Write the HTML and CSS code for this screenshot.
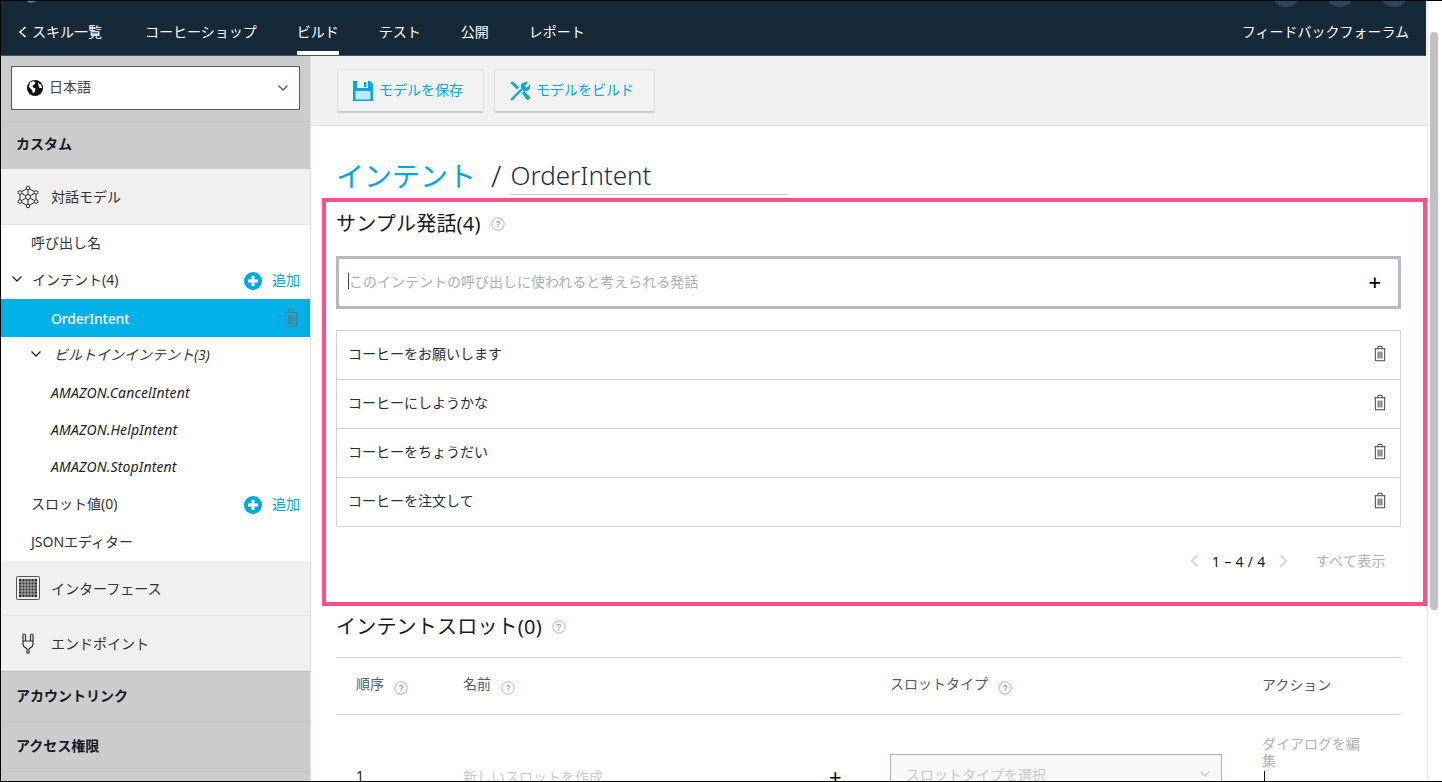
FILE: index.html
```html
<!DOCTYPE html>
<html lang="ja">

<head>
    <meta charset="UTF-8">
    <meta name="viewport" content="width=device-width, initial-scale=1.0">
    <title>インテント / OrderIntent</title>
    <link rel="stylesheet" href="styles.css">
</head>

<body>
    <svg class="sprites" width="0" height="0">
        <symbol id="trash" viewBox="0 0 16 20">
            <path d="M1.500 4.500h13M5.500 4.500V2.500q0-1 1-1h3q1 0 1 1v2M2.500 4.500v13q0 1 1 1h9q1 0 1-1v-13M5.800 7.500v8.500M8 7.500v8.500M10.200 7.500v8.500" fill="none" stroke="currentColor" stroke-width="1.200"/>
        </symbol>
        <symbol id="help" viewBox="0 0 14 14">
            <circle cx="7" cy="7" r="6.200" fill="none" stroke="#aab7b8" stroke-width="1"/>
            <text x="7" y="10" text-anchor="middle" font-size="8.500" fill="#7b8a8b" font-family="Liberation Sans, sans-serif">?</text>
        </symbol>
        <symbol id="add" viewBox="0 0 18 18">
            <circle cx="9" cy="9" r="9" fill="#00a8e1"/>
            <path d="M9 4v10M4 9h10" stroke="#fff" stroke-width="3"/>
        </symbol>
        <symbol id="chev" viewBox="0 0 12 8">
            <path d="M1.500 1.500 6 6l4.500-4.500" fill="none" stroke="currentColor" stroke-width="1.300"/>
        </symbol>
    </svg>

    <div class="frame">
        <header class="topbar">
            <div class="top-strip">
                <span class="logo-dot"></span>
                <span class="avatars"><i></i><i></i><i></i></span>
            </div>
            <nav class="nav">
                <a class="nav-item back-link">
                    <svg width="9" height="12" viewBox="0 0 9 12"><path d="M7.500 1 2 6l5.500 5" fill="none" stroke="#fff" stroke-width="1.600"/></svg>
                    スキル一覧
                </a>
                <a class="nav-item">コーヒーショップ</a>
                <a class="nav-item active">ビルド</a>
                <a class="nav-item">テスト</a>
                <a class="nav-item">公開</a>
                <a class="nav-item">レポート</a>
                <a class="nav-item nav-right">フィードバックフォーラム</a>
            </nav>
        </header>

        <div class="layout">
            <aside class="sidebar">
                <div class="lang-wrap">
                    <div class="lang-select">
                        <svg class="globe" width="16" height="16" viewBox="0 0 16 16">
                            <circle cx="8" cy="8" r="8" fill="#111"/>
                            <path d="M3 2.500 6.500 1l2 1.500-1 2-2 1 .5 2 2.500 1-.5 3-2 2-1-3.500L2 7zM11 3l3 1.500 1 3.500-2.500 0-1-2.500z" fill="#fff"/>
                        </svg>
                        <span class="cjk-text">日本語</span>
                        <svg class="lang-chev" width="12" height="8"><use href="#chev"/></svg>
                    </div>
                </div>

                <div class="group-head first">カスタム</div>

                <div class="section-row model-row">
                    <svg class="section-icon" width="24" height="24" viewBox="-1 0 24 24" fill="none" stroke="#333" stroke-width="1">
                        <path d="M11 3 19 7.500v9L11 21 3 16.500v-9z"/>
                        <circle cx="11" cy="12" r="2.500"/>
                        <path d="M11 3v6.500M11 14.500V21M3 7.500l5.800 3.300M13.200 13.200 19 16.500M19 7.500l-5.800 3.300M8.800 13.200 3 16.500"/>
                        <circle cx="11" cy="3" r="1.800" fill="#f0f0f0"/>
                        <circle cx="11" cy="21" r="1.800" fill="#f0f0f0"/>
                        <circle cx="3" cy="7.500" r="1.800" fill="#f0f0f0"/>
                        <circle cx="19" cy="7.500" r="1.800" fill="#f0f0f0"/>
                        <circle cx="3" cy="16.500" r="1.800" fill="#f0f0f0"/>
                        <circle cx="19" cy="16.500" r="1.800" fill="#f0f0f0"/>
                    </svg>
                    <span>対話モデル</span>
                </div>

                <ul class="tree">
                    <li class="tree-row lvl1">呼び出し名</li>
                    <li class="tree-row lvl1 has-add">
                        <svg class="tree-chev" width="12" height="8"><use href="#chev"/></svg>
                        <span>インテント(4)</span>
                        <span class="add"><svg width="18" height="18"><use href="#add"/></svg>追加</span>
                    </li>
                    <li class="tree-row lvl2 selected">
                        <span>OrderIntent</span>
                        <svg class="row-trash" width="16" height="20"><use href="#trash"/></svg>
                    </li>
                    <li class="tree-row lvl2 builtin">
                        <svg class="tree-chev" width="12" height="8"><use href="#chev"/></svg>
                        <span>ビルトインインテント(3)</span>
                    </li>
                    <li class="tree-row lvl2 amazon">AMAZON.CancelIntent</li>
                    <li class="tree-row lvl2 amazon">AMAZON.HelpIntent</li>
                    <li class="tree-row lvl2 amazon">AMAZON.StopIntent</li>
                    <li class="tree-row lvl1 has-add value-row">
                        <span>スロット値(0)</span>
                        <span class="add"><svg width="18" height="18"><use href="#add"/></svg>追加</span>
                    </li>
                    <li class="tree-row lvl1 json-row">JSONエディター</li>
                </ul>

                <div class="section-row">
                    <svg class="section-icon" width="24" height="24" viewBox="0 0 24 24">
                        <rect x="0.500" y="0.500" width="23" height="23" rx="1" fill="#eee" stroke="#555"/>
                        <rect x="3" y="3" width="18" height="18" fill="#333"/>
                        <path d="M6 3v18M9 3v18M12 3v18M15 3v18M18 3v18M3 6h18M3 9h18M3 12h18M3 15h18M3 18h18" stroke="#ccc" stroke-width="0.800"/>
                    </svg>
                    <span>インターフェース</span>
                </div>
                <div class="section-row">
                    <svg class="section-icon" width="24" height="24" viewBox="0 0 24 24" fill="none" stroke="#333" stroke-width="1.200">
                        <path d="M7 10h10v2.500q0 3.500-3 4.500l-1 1v4h-2v-4l-1-1q-3-1-3-4.500zM9.500 10V4.500q0-1.500-1.250-1.500T7 4.500V10M17 10V4.500Q17 3 15.750 3T14.500 4.500V10"/>
                    </svg>
                    <span>エンドポイント</span>
                </div>

                <div class="group-head">アカウントリンク</div>
                <div class="group-head">アクセス権限</div>
                <div class="group-head"></div>
            </aside>

            <main class="content">
                <div class="toolbar">
                    <button class="tool-btn">
                        <svg width="20" height="20" viewBox="0 0 20 20">
                            <path d="M0 0h17l3 3v17H0z" fill="#00a8e1"/>
                            <rect x="4" y="0" width="11" height="7" fill="#fff"/>
                            <rect x="11" y="1" width="2.500" height="5" fill="#00a8e1"/>
                            <rect x="2.500" y="10" width="15" height="8.500" fill="#bfe9f8"/>
                        </svg>
                        モデルを保存
                    </button>
                    <button class="tool-btn">
                        <svg width="20" height="20" viewBox="0 0 20 20" fill="#00a8e1">
                            <path d="M1 17.500 11 7.500l1.500 1.500-10 10q-1 .8-1.800 0t.3-1.500zM12 2.500Q15 0 18 1.500L15 4.500l.5 1.500 1.500.5 3-3q1 3-1.500 5.500T13 9.500L11 7q-.8-2.500 1-4.500z"/>
                            <path d="M1 1 3 .5l6 6-2 2-6-6zM12 12l2-2 5.500 5.500q.8 1 0 2.500-1.500 1.500-2.800.5z"/>
                        </svg>
                        モデルをビルド
                    </button>
                </div>

                <div class="title-row">
                    <a class="title-link">インテント</a>
                    <span class="title-sep">/</span>
                    <span class="title-name">OrderIntent</span>
                </div>

                <section class="utterances">
                    <h2 class="sec-title">サンプル発話(4) <svg class="help" width="14" height="14"><use href="#help"/></svg></h2>
                    <div class="utter-input">
                        <span class="caret"></span>
                        <span class="placeholder">このインテントの呼び出しに使われると考えられる発話</span>
                        <span class="plus">+</span>
                    </div>
                    <ul class="utter-list">
                        <li>コーヒーをお願いします<svg width="14" height="17"><use href="#trash"/></svg></li>
                        <li>コーヒーにしようかな<svg width="14" height="17"><use href="#trash"/></svg></li>
                        <li>コーヒーをちょうだい<svg width="14" height="17"><use href="#trash"/></svg></li>
                        <li>コーヒーを注文して<svg width="14" height="17"><use href="#trash"/></svg></li>
                    </ul>
                    <div class="pager">
                        <svg width="9" height="14" viewBox="0 0 9 14"><path d="M7.500 1.500 2 7l5.500 5.500" fill="none" stroke="#d9dddd" stroke-width="2.500"/></svg>
                        <span class="pager-count">1 – 4 / 4</span>
                        <svg width="9" height="14" viewBox="0 0 9 14"><path d="M1.500 1.500 7 7l-5.500 5.500" fill="none" stroke="#d9dddd" stroke-width="2.500"/></svg>
                        <a class="show-all">すべて表示</a>
                    </div>
                </section>

                <section class="slots">
                    <h2 class="sec-title">インテントスロット(0) <svg class="help" width="14" height="14"><use href="#help"/></svg></h2>
                    <div class="slot-grid slot-head">
                        <span>順序 <svg class="help" width="14" height="14"><use href="#help"/></svg></span>
                        <span>名前 <svg class="help" width="14" height="14"><use href="#help"/></svg></span>
                        <span></span>
                        <span>スロットタイプ <svg class="help" width="14" height="14"><use href="#help"/></svg></span>
                        <span>アクション</span>
                    </div>
                    <div class="slot-grid slot-row">
                        <span class="slot-num">1</span>
                        <span class="slot-new">新しいスロットを作成</span>
                        <span class="slot-plus">+</span>
                        <span class="slot-type">スロットタイプを選択<svg width="12" height="8"><use href="#chev"/></svg></span>
                        <span class="slot-action">ダイアログを編集<i class="slot-caret"></i></span>
                    </div>
                </section>
            </main>

            <div class="scrollbar"><div class="scroll-thumb"></div></div>
        </div>
    </div>
</body>

</html>
```

FILE: styles.css
```css
* {
    box-sizing: border-box;
}

html,
body {
    margin: 0;
    height: 100%;
    overflow: hidden;
}

body {
    font-family: "Noto Sans", "Noto Sans CJK JP", sans-serif;
    font-size: 14px;
    color: #232f3e;
    background: #fff;
}

.sprites {
    position: absolute;
}

.frame {
    height: 782px;
    border-top: 1px solid #000;
    border-left: 1px solid #000;
    border-bottom: 1px solid #000;
    overflow: hidden;
    display: flex;
    flex-direction: column;
}

/* top bar */
.topbar {
    height: 55px;
    flex: none;
    margin-right: 16px;
    background: #162938;
    border-bottom: 1px solid #3c566b;
    color: #fff;
}

.top-strip {
    height: 14px;
    display: flex;
    justify-content: space-between;
    overflow: hidden;
}

.logo-dot {
    width: 10px;
    height: 10px;
    margin: -8px 0 0 25px;
    border-radius: 50%;
    background: #1b8fc0;
}

.avatars {
    display: flex;
    gap: 26px;
    margin: -22px 18px 0 0;
}

.avatars i {
    width: 28px;
    height: 28px;
    border-radius: 50%;
    background: #2f4560;
}

.nav {
    height: 40px;
    display: flex;
    gap: 40px;
    padding: 0 17px 0 17px;
}

.nav-item {
    height: 40px;
    line-height: 34px;
    font-size: 14px;
    white-space: nowrap;
}

.back-link {
    display: flex;
    align-items: center;
    height: 34px;
    gap: 5px;
    margin-right: 3px;
}

.nav-item.active {
    border-bottom: 4px solid #fff;
}

.nav-right {
    margin-left: auto;
}

.layout {
    flex: 1;
    display: flex;
    min-height: 0;
}

/* sidebar */
.sidebar {
    width: 310px;
    flex: none;
    border-right: 1px solid #dfe1e1;
    background: #fff;
}

.lang-wrap {
    height: 65px;
    padding: 10px 10px 0;
    background: #cbcdcc;
}

.lang-select {
    height: 44px;
    display: flex;
    align-items: center;
    gap: 6px;
    padding: 0 10px 0 15px;
    background: #fff;
    border: 1px solid #545b64;
    color: #444;
}

.cjk-text {
    padding-bottom: 4px;
}

.lang-chev {
    margin-left: auto;
    color: #555;
}

.group-head {
    height: 50px;
    display: flex;
    align-items: center;
    padding: 0 0 4px 15px;
    background: #cbcdcc;
    border-top: 1px solid #c0c2c1;
    font-weight: 700;
    color: #16191f;
}

.group-head.first {
    height: 48px;
    padding-bottom: 5px;
}

.section-row {
    height: 55px;
    display: flex;
    align-items: center;
    gap: 11px;
    padding-left: 15px;
    background: #f0f0f0;
    border-bottom: 1px solid #e4e4e4;
    color: #333;
}

.section-row span {
    padding-bottom: 1px;
}

.model-row {
    height: 56px;
}

.section-icon {
    flex: none;
}

.tree {
    list-style: none;
    margin: 0;
    padding: 0;
    height: 336px;
}

.tree-row {
    height: 37px;
    display: flex;
    align-items: center;
    padding-bottom: 4px;
    color: #333;
}

.lvl1 {
    padding-left: 30px;
}

.lvl2 {
    padding-left: 50px;
}

.json-row {
    padding-bottom: 0;
}

.value-row {
    padding-bottom: 2px;
}

.tree-chev {
    flex: none;
    color: #222;
    margin-left: -20px;
    margin-right: 9px;
}

.builtin {
    font-style: italic;
    padding-left: 29px;
}

.builtin .tree-chev {
    margin-left: 0;
    margin-right: 12px;
}

.amazon {
    padding-bottom: 1px;
    font-style: italic;
    letter-spacing: 0.15px;
    color: #222;
}

.selected {
    height: 38px;
    padding-bottom: 0;
    background: #00b0e6;
    color: #fff;
    font-weight: 500;
    letter-spacing: -0.2px;
    padding-right: 11px;
    justify-content: space-between;
}

.row-trash {
    color: #5f7482;
}

.add {
    margin-left: auto;
    margin-right: 10px;
    display: flex;
    align-items: center;
    gap: 10px;
    color: #00a8e1;
}

.add svg {
    margin-top: 4px;
}

/* main column */
.content {
    flex: 1;
    min-width: 0;
}

.toolbar {
    height: 70px;
    display: flex;
    gap: 10px;
    padding: 13px 26px 0;
    background: #f1f1f1;
    border-bottom: 1px solid #e3e3e3;
}

.tool-btn {
    height: 44px;
    display: flex;
    align-items: center;
    gap: 6px;
    padding: 0 20px 4px 15px;
    background: #f2f2f2;
    border: 1px solid #e0e0e0;
    border-bottom: 2px solid #ccc;
    border-radius: 2px;
    font: inherit;
    color: #00a8e1;
}

.tool-btn svg {
    margin-top: 4px;
}

.title-row {
    height: 72px;
    display: flex;
    align-items: center;
    padding: 27px 0 0 25px;
}

.title-link {
    font-size: 28px;
    margin-bottom: 2px;
    color: #00a8e1;
}

.title-sep {
    font-size: 30px;
    font-weight: 300;
    margin-left: 15px;
    color: #232f3e;
}

.title-name {
    width: 278px;
    margin-left: 9px;
    font-size: 26px;
    font-weight: 300;
    line-height: 38px;
    border-bottom: 1px solid #c5cdcd;
    color: #232f3e;
}

.utterances {
    height: 408px;
    margin-left: 11px;
    padding: 8px 22px 0 10px;
    border: 4px solid #ff4f8b;
}

.sec-title {
    margin: 0;
    height: 28px;
    display: flex;
    align-items: center;
    gap: 6px;
    padding-bottom: 3px;
    font-size: 20px;
    font-weight: 400;
    letter-spacing: 0.2px;
    color: #16191f;
}

.help {
    vertical-align: middle;
    flex: none;
}

.sec-title .help {
    margin-top: 3px;
    margin-left: 4px;
}

.utter-input {
    height: 53px;
    margin-top: 18px;
    display: flex;
    align-items: center;
    padding: 0 17px 4px 9px;
    border: 3px solid #b9b9c6;
}

.caret {
    width: 1px;
    height: 16px;
    background: #444;
}

.placeholder {
    color: #aab0b4;
}

.plus {
    margin-left: auto;
    font-size: 22px;
    line-height: 22px;
    font-weight: 500;
    color: #000;
}

.utter-list {
    list-style: none;
    margin: 21px 0 0;
    padding: 0;
    border: 1px solid #d0d0da;
}

.utter-list li {
    height: 49px;
    display: flex;
    align-items: center;
    justify-content: space-between;
    padding: 0 13px 4px 11px;
    border-bottom: 1px solid #d0d0da;
    color: #232f3e;
}

.utter-list li:last-child {
    height: 48px;
    border-bottom: 0;
}

.utter-list svg {
    color: #444;
}

.pager {
    display: flex;
    align-items: center;
    justify-content: flex-end;
    gap: 13px;
    height: 30px;
    margin-top: 19px;
    padding-right: 15px;
}

.pager-count {
    color: #16191f;
    letter-spacing: 0.3px;
}

.show-all {
    margin-left: 15px;
    padding-bottom: 2px;
    letter-spacing: 0.4px;
    color: #aab7b8;
}

.slots {
    padding: 7px 26px 0 25px;
}

.slot-grid {
    display: grid;
    grid-template-columns: 107px 354px 73px 372px 1fr;
    padding-left: 20px;
    color: #545b64;
}

.slot-head {
    height: 58px;
    margin-top: 16px;
    align-items: center;
    padding-bottom: 4px;
    border-top: 1px solid #d0d0da;
    border-bottom: 1px solid #d0d0da;
}

.slot-head svg {
    margin-left: 6px;
    margin-top: 4px;
}

.slot-row {
    height: 70px;
}

.slot-num {
    padding-top: 51px;
    color: #16191f;
}

.slot-new {
    padding-top: 51px;
    color: #c5cccc;
}

.slot-plus {
    padding: 46px 0 0 12px;
    font-size: 22px;
    line-height: 30px;
    color: #000;
}

.slot-type {
    width: 332px;
    height: 40px;
    margin-top: 39px;
    display: flex;
    align-items: center;
    justify-content: space-between;
    padding: 0 10px 0 15px;
    background: #f7f8f8;
    border: 1px solid #aab7b8;
    color: #c5cccc;
}

.slot-action {
    position: relative;
    width: 100px;
    padding-top: 20px;
    line-height: 17px;
    color: #aab7b8;
}

.slot-caret {
    position: absolute;
    left: 2px;
    top: 56px;
    width: 1px;
    height: 16px;
    background: #111;
}

/* scrollbar */
.scrollbar {
    width: 15px;
    flex: none;
    padding: 0 4px 0 2px;
    border-left: 1px solid #e8e8e8;
    margin-top: -55px;
    background: #fff;
}

.scroll-thumb {
    height: 578px;
    margin-top: 31px;
    border-radius: 4px;
    background: #c1c1c1;
}
```
